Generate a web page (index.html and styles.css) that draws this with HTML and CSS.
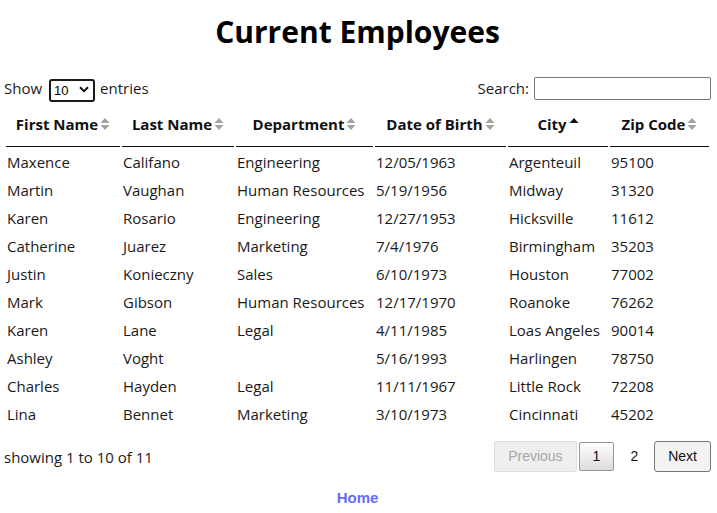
FILE: index.html
```html
<!DOCTYPE html>
<html lang="en">
<head>
<meta charset="utf-8">
<title>Current Employees</title>
<link rel="stylesheet" href="styles.css">
</head>
<body>
<div class="page">
  <h1 class="title">Current Employees</h1>
  <div class="controls">
    <label class="length">Show
      <span class="select-wrap">
        <select class="select"><option>10</option><option>25</option><option>50</option><option>100</option></select>
        <svg class="chev" width="10" height="7" viewBox="0 0 10 7"><path d="M1 1.2 L5 5.2 L9 1.2" fill="none" stroke="#111" stroke-width="2"/></svg>
      </span>
      entries</label>
    <label class="search">Search: <input class="search-input" type="search"></label>
  </div>
  <table class="table">
    <colgroup>
      <col class="c1"><col class="c2"><col class="c3"><col class="c4"><col class="c5"><col class="c6">
    </colgroup>
    <thead>
      <tr>
        <th>First Name<svg class="sort" width="10" height="14" viewBox="0 0 10 14"><path d="M0.5 6 L5 1 L9.5 6Z" fill="#a3a3a3"/><path d="M0.5 8 L5 13 L9.5 8Z" fill="#a3a3a3"/></svg></th>
        <th>Last Name<svg class="sort" width="10" height="14" viewBox="0 0 10 14"><path d="M0.5 6 L5 1 L9.5 6Z" fill="#a3a3a3"/><path d="M0.5 8 L5 13 L9.5 8Z" fill="#a3a3a3"/></svg></th>
        <th>Department<svg class="sort" width="10" height="14" viewBox="0 0 10 14"><path d="M0.5 6 L5 1 L9.5 6Z" fill="#a3a3a3"/><path d="M0.5 8 L5 13 L9.5 8Z" fill="#a3a3a3"/></svg></th>
        <th>Date of Birth<svg class="sort" width="10" height="14" viewBox="0 0 10 14"><path d="M0.5 6 L5 1 L9.5 6Z" fill="#a3a3a3"/><path d="M0.5 8 L5 13 L9.5 8Z" fill="#a3a3a3"/></svg></th>
        <th>City<svg class="sort" width="10" height="14" viewBox="0 0 10 14"><path d="M0.5 6 L5 1 L9.5 6Z" fill="#111"/></svg></th>
        <th>Zip Code<svg class="sort" width="10" height="14" viewBox="0 0 10 14"><path d="M0.5 6 L5 1 L9.5 6Z" fill="#a3a3a3"/><path d="M0.5 8 L5 13 L9.5 8Z" fill="#a3a3a3"/></svg></th>
      </tr>
    </thead>
    <tbody>
      <tr><td>Maxence</td><td>Califano</td><td>Engineering</td><td>12/05/1963</td><td>Argenteuil</td><td>95100</td></tr>
      <tr><td>Martin</td><td>Vaughan</td><td>Human Resources</td><td>5/19/1956</td><td>Midway</td><td>31320</td></tr>
      <tr><td>Karen</td><td>Rosario</td><td>Engineering</td><td>12/27/1953</td><td>Hicksville</td><td>11612</td></tr>
      <tr><td>Catherine</td><td>Juarez</td><td>Marketing</td><td>7/4/1976</td><td>Birmingham</td><td>35203</td></tr>
      <tr><td>Justin</td><td>Konieczny</td><td>Sales</td><td>6/10/1973</td><td>Houston</td><td>77002</td></tr>
      <tr><td>Mark</td><td>Gibson</td><td>Human Resources</td><td>12/17/1970</td><td>Roanoke</td><td>76262</td></tr>
      <tr><td>Karen</td><td>Lane</td><td>Legal</td><td>4/11/1985</td><td>Loas Angeles</td><td>90014</td></tr>
      <tr><td>Ashley</td><td>Voght</td><td></td><td>5/16/1993</td><td>Harlingen</td><td>78750</td></tr>
      <tr><td>Charles</td><td>Hayden</td><td>Legal</td><td>11/11/1967</td><td>Little Rock</td><td>72208</td></tr>
      <tr><td>Lina</td><td>Bennet</td><td>Marketing</td><td>3/10/1973</td><td>Cincinnati</td><td>45202</td></tr>
    </tbody>
  </table>
  <div class="footer">
    <div class="info">showing 1 to 10 of 11</div>
    <div class="paginate">
      <span class="pbtn disabled">Previous</span>
      <span class="pbtn current">1</span>
      <span class="pbtn plain">2</span>
      <span class="pbtn next">Next</span>
    </div>
  </div>
  <div class="home-row"><a class="home" href="#">Home</a></div>
</div>
</body>
</html>
```

FILE: styles.css
```css
html, body {
  margin: 0;
  padding: 0;
  background: #fff;
}
body {
  font-family: "Open Sans", "Noto Sans", sans-serif;
  font-size: 15px;
  line-height: 24px;
  color: #1a1a1a;
}
.page {
  padding: 0 6px 0 4px;
}
.title {
  margin: 12px 0 0;
  font-size: 30px;
  line-height: 40px;
  font-weight: 700;
  text-align: center;
  color: #000;
}
.controls {
  margin-top: 24px;
  height: 24px;
  display: flex;
  justify-content: space-between;
  align-items: center;
}
.length, .search {
  display: flex;
  align-items: center;
}
.select-wrap {
  position: relative;
  display: inline-block;
  margin: 0 5px 0 7px;
  height: 23px;
}
.select {
  -webkit-appearance: none;
  appearance: none;
  box-sizing: border-box;
  width: 46px;
  height: 23px;
  border: 2px solid #1a1a1a;
  border-radius: 3px;
  background: #fff;
  font-family: "Liberation Sans", Arial, sans-serif;
  font-size: 13px;
  padding: 0 0 0 3px;
  color: #000;
  margin: 0;
}
.chev {
  position: absolute;
  right: 6px;
  top: 9px;
  pointer-events: none;
}
.search-input {
  box-sizing: border-box;
  width: 177px;
  height: 23px;
  margin: 0 0 0 5px;
  border: 1px solid #767676;
  border-radius: 2px;
  padding: 0 4px;
  font-size: 13px;
}
.table {
  width: 100%;
  table-layout: fixed;
  border-collapse: separate;
  border-spacing: 2px;
}
.c1 { width: 114px; }
.c2 { width: 112px; }
.c3 { width: 137px; }
.c4 { width: 131px; }
.c5 { width: 100px; }
.c6 { width: 99px; }
.table th {
  font-weight: 700;
  text-align: center;
  padding: 10px 2px;
  line-height: 24px;
  border-bottom: 1px solid #111;
  white-space: nowrap;
  color: #111;
}
.sort {
  vertical-align: -1px;
  margin-left: 2px;
}
.table td {
  padding: 1px;
  line-height: 24px;
  white-space: nowrap;
  overflow: hidden;
}
.footer {
  margin-top: 12px;
  display: flex;
  justify-content: space-between;
  align-items: center;
}
.info {
  line-height: 24px;
}
.paginate {
  display: flex;
  align-items: center;
}
.pbtn {
  box-sizing: border-box;
  font-family: "Liberation Sans", Arial, sans-serif;
  font-size: 14px;
  line-height: 15px;
  padding: 7px 13px;
  border: 1px solid transparent;
  border-radius: 2px;
  margin-left: 2px;
  color: #333;
}
.pbtn.disabled {
  margin-left: 0;
  color: #a6a6a6;
  background: #efefef;
  border-color: #dedede;
}
.pbtn.current {
  padding: 6px 13px;
  color: #111;
  border-color: #979797;
  background: linear-gradient(#ffffff, #dcdcdc);
}
.pbtn.plain {
  color: #111;
}
.pbtn.next {
  color: #111;
  background: #f3f3f3;
  border-color: #767676;
  border-radius: 3px;
}
.home-row {
  margin-top: 15px;
  text-align: center;
  line-height: 20px;
}
.home {
  font-family: "Liberation Sans", Arial, sans-serif;
  font-size: 15px;
  font-weight: 700;
  color: #646cff;
  text-decoration: none;
}
```
